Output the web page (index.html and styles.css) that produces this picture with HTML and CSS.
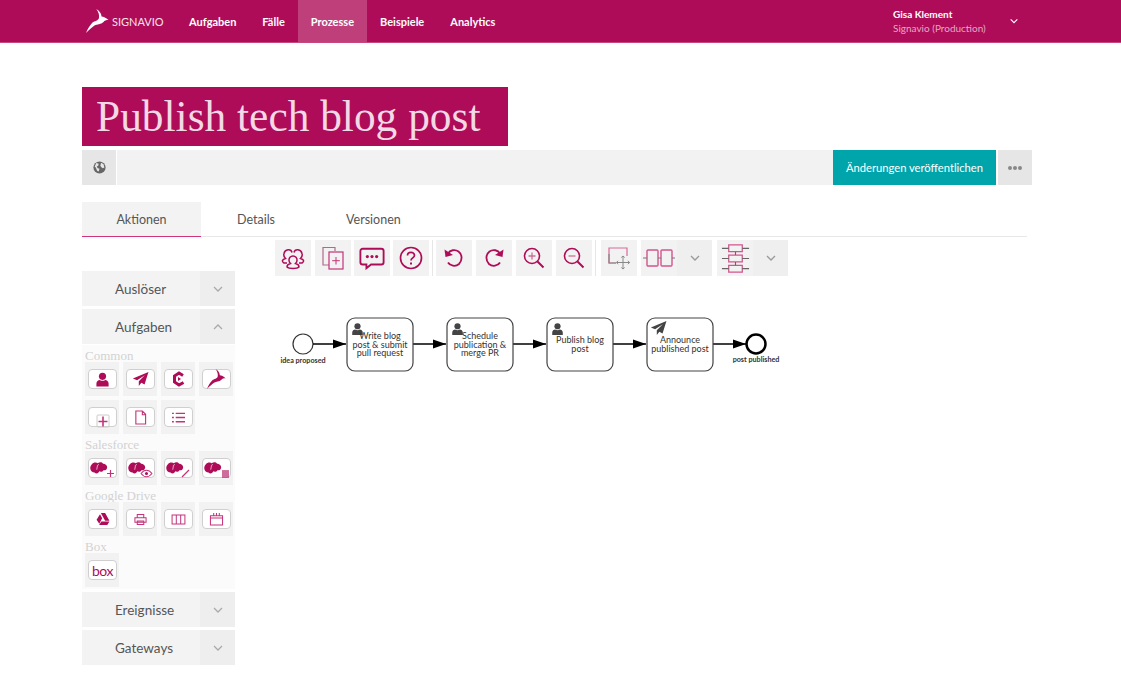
FILE: index.html
```html
<!DOCTYPE html>
<html lang="en">
<head>
    <meta charset="UTF-8">
    <meta name="viewport" content="width=device-width, initial-scale=1.0">
    <title>Publish tech blog post</title>
    <link rel="stylesheet" href="styles.css">
</head>
<body>

    <svg class="defs" width="0" height="0">
        <symbol id="person" viewBox="0 0 16 16">
            <circle cx="8" cy="4.6" r="3.8"/>
            <path d="M1.500 15.500v-3.200c0-2.400 2-3.600 3.600-3.800 1.700 1.200 4.100 1.200 5.800 0 1.600.2 3.600 1.400 3.600 3.800v3.200z"/>
        </symbol>
        <symbol id="plane" viewBox="0 0 16 16">
            <path d="M15.500 1 .8 7l4 1.600L12 4 6.400 9.600v4.400l2.400-3 3 1.600z"/>
        </symbol>
        <symbol id="gazelle" viewBox="0 0 23 24">
            <path d="M10.300 0C13.500 2 15.500 4.500 15.500 7.500 17.500 7.500 20 9 22.500 11 20 11 18.500 11.500 17.500 13 15 15.500 11 15 8.500 16.500 6 18 3 21 0 24 1.500 20 4 16 6.500 13.500 8.500 12.200 12.500 11.500 13 9 13.500 6 12.500 3 10.300 0z"/>
        </symbol>
        <symbol id="cloud" viewBox="0 0 22 16">
            <path d="M2 3C4 0 8 0 9.500 1.500c2-1.500 5-1.500 6.500.5 2.500 0 5.500 2 5 5-.3 2.500-2.500 3.500-4.500 3-1 2-3.500 2.500-5 1.500-1 2.500-4 3.500-6 1.500C3 13 .5 11 .3 8 0 6 1 4 2 3z"/>
            <path class="cloud-s" d="M11 3.500c-1-.5-2 0-2 1.500l-.8 4.500"/>
        </symbol>
        <symbol id="chev" viewBox="0 0 12 8">
            <path d="M2 2l4 4 4-4" fill="none" stroke="currentColor" stroke-width="1.300"/>
        </symbol>
    </svg>

    <!-- Top bar -->
    <header class="topbar">
        <a class="brand">
            <svg class="brand-logo"><use href="#gazelle"/></svg>
            <span class="brand-name">SIGNAVIO</span>
        </a>
        <nav class="topnav">
            <a class="topnav-item">Aufgaben</a>
            <a class="topnav-item">Fälle</a>
            <a class="topnav-item active">Prozesse</a>
            <a class="topnav-item">Beispiele</a>
            <a class="topnav-item">Analytics</a>
        </nav>
        <div class="user">
            <div class="user-text">
                <strong>Gisa Klement</strong>
                <span>Signavio (Production)</span>
            </div>
            <svg class="user-chev"><use href="#chev"/></svg>
        </div>
    </header>

    <main class="page">
        <h1 class="title">Publish tech blog post</h1>

        <!-- Action bar -->
        <div class="actionbar">
            <div class="actionbar-globe">
                <svg viewBox="0 0 16 16" width="13" height="13">
                    <circle cx="8" cy="8" r="7.500" fill="#666"/>
                    <path d="M4 2.500l3 1-.5 2-2 1.500 1.500 2 2 .5L7 13l-2-1-1.500-4-1.500-1zM10 2l3 2 1 4-2 1-2-1.500-1-2z" fill="#e6e6e6"/>
                </svg>
            </div>
            <div class="actionbar-fill"></div>
            <button class="publish">Änderungen veröffentlichen</button>
            <div class="actionbar-more"><i></i><i></i><i></i></div>
        </div>

        <div class="tabs">
            <a class="tab active">Aktionen</a>
            <a class="tab tab-details">Details</a>
            <a class="tab tab-versions">Versionen</a>
        </div>

        <div class="workspace">
            <!-- Palette on the left -->
            <aside class="palette">
                <div class="acc"><span class="acc-label">Auslöser</span><span class="acc-chev"><svg><use href="#chev"/></svg></span></div>
                <div class="acc"><span class="acc-label">Aufgaben</span><span class="acc-chev up"><svg><use href="#chev"/></svg></span></div>
                <div class="acc-body">
                    <div class="group-name">Common</div>
                    <div class="tiles">
                        <div class="tile"><div class="tile-btn"><svg class="ico" width="15" height="15"><use href="#person"/></svg></div></div>
                        <div class="tile"><div class="tile-btn"><svg class="ico" width="17" height="17"><use href="#plane"/></svg></div></div>
                        <div class="tile"><div class="tile-btn"><svg class="ico-hex" viewBox="0 0 16 16" width="16" height="16"><path d="M12 4.500 8 2 3.500 5v6L8 14l4.500-2.500" stroke-width="3"/><path class="solid" d="M7 6l3 2-3 2z"/></svg></div></div>
                        <div class="tile"><div class="tile-btn"><svg class="ico" width="19" height="20"><use href="#gazelle"/></svg></div></div>
                        <div class="tile"><div class="tile-btn"><svg class="ico-line low" viewBox="0 0 14 14" width="14" height="14"><rect x="1" y="1" width="12" height="12" rx="1" stroke="#ccc"/><path d="M7 2.500v10M2.500 7.500h9" stroke-width="1.600"/></svg></div></div>
                        <div class="tile"><div class="tile-btn"><svg class="ico-line" viewBox="0 0 14 16" width="13" height="15"><path d="M2 1h7l3.500 3.500V15H2zM9 1v4h3.500" stroke-width="1.200"/></svg></div></div>
                        <div class="tile"><div class="tile-btn"><svg class="ico-line" viewBox="0 0 16 14" width="15" height="13"><path d="M5 2.500h10M5 7h10M5 11.500h10M1 2.500h2M1 7h2M1 11.500h2" stroke-width="1.500"/></svg></div></div>
                    </div>
                    <div class="group-name">Salesforce</div>
                    <div class="tiles">
                        <div class="tile"><div class="tile-btn"><svg class="ico cloud" width="18" height="13"><use href="#cloud"/></svg><svg class="ico-line mark" viewBox="0 0 9 9" width="9" height="9"><path d="M4.500 1v7M1 4.500h7" stroke-width="1.200"/></svg></div></div>
                        <div class="tile"><div class="tile-btn"><svg class="ico cloud" width="18" height="13"><use href="#cloud"/></svg><svg class="ico-line mark" viewBox="0 0 12 8" width="13" height="9"><path d="M1 4c3-4 7-4 10 0-3 4-7 4-10 0z" stroke-width="1"/><circle cx="6" cy="4" r="1.400" fill="#ae0c58" stroke="none"/></svg></div></div>
                        <div class="tile"><div class="tile-btn"><svg class="ico cloud" width="18" height="13"><use href="#cloud"/></svg><svg class="ico-line mark" viewBox="0 0 10 10" width="10" height="10"><path d="M1 9l7-7" stroke-width="1.300"/></svg></div></div>
                        <div class="tile"><div class="tile-btn"><svg class="ico cloud" width="18" height="13"><use href="#cloud"/></svg><svg class="ico mark" viewBox="0 0 8 9" width="7" height="8"><path d="M0 0h8v9H0z" opacity=".6"/></svg></div></div>
                    </div>
                    <div class="group-name">Google Drive</div>
                    <div class="tiles">
                        <div class="tile"><div class="tile-btn"><svg class="ico" viewBox="0 0 16 14" width="14" height="12"><path d="M5.500 0h5l5 9h-5zM4.500 1.500l2.500 4.500-3.300 6.500L.5 8zM6 10h9.500L13 14H3.500z"/></svg></div></div>
                        <div class="tile"><div class="tile-btn"><svg class="ico-line" viewBox="0 0 14 14" width="13" height="13"><path d="M3.500 5V1.500h7V5M1 5h12v5H1zM3.500 8.500h7v4h-7z" stroke-width="1.100"/></svg></div></div>
                        <div class="tile"><div class="tile-btn"><svg class="ico-line" viewBox="0 0 16 12" width="15" height="11"><path d="M1 1h14v10H1zM5.600 1v10M10.400 1v10" stroke-width="1.100"/></svg></div></div>
                        <div class="tile"><div class="tile-btn"><svg class="ico-line" viewBox="0 0 16 15" width="15" height="14"><path d="M1.500 4h13v10h-13zM1.500 6.500h13M5 1v3.500M8 1v3.500M11 1v3.500" stroke-width="1.100"/></svg></div></div>
                    </div>
                    <div class="group-name">Box</div>
                    <div class="tiles">
                        <div class="tile"><div class="tile-btn box-logo">box</div></div>
                    </div>
                </div>
                <div class="acc"><span class="acc-label">Ereignisse</span><span class="acc-chev"><svg><use href="#chev"/></svg></span></div>
                <div class="acc"><span class="acc-label">Gateways</span><span class="acc-chev"><svg><use href="#chev"/></svg></span></div>
            </aside>

            <section class="editor">
                <!-- Editor toolbar -->
                <div class="tools">
                    <div class="tool"><svg class="tool-ico" viewBox="0 0 24 24"><path d="M12 10a4 4 0 0 1 4 4.500c0 1.500-1 2.500-1.500 3 2 .5 3.500 1.500 3.500 3.500-2 2-10 2-12 0 0-2 1.500-3 3.500-3.500-.5-.5-1.500-1.500-1.500-3a4 4 0 0 1 4-4.500z" stroke-width="1.500"/><path d="M6 17H3C.5 15.500 1 13.500 4.500 12.500 3 11 2.500 9 3 7.500 4 3 10 2.500 11 6.500M18 17h3c2.500-1.500 2-3.500-1.500-4.500 1.500-1.500 2-3.500 1.500-5C20 3 14 2.500 13 6.500" stroke-width="1.500"/></svg></div>
                    <div class="tool"><svg class="tool-ico" viewBox="0 0 24 24"><path d="M14 5V1.500H2V19h6" stroke="#b06a8c" stroke-width="1.200"/><rect x="8" y="6" width="14" height="17" stroke="#c4337a" stroke-width="1.200"/><path d="M15 11v7.500M11.200 14.700h7.600" stroke="#c4337a" stroke-width="1"/></svg></div>
                    <div class="tool tight"><svg class="tool-ico chat" viewBox="0 0 28 24"><path d="M4 2h20a2.500 2.500 0 0 1 2.500 2.500v12A2.500 2.500 0 0 1 24 19H13l-5 4v-4H4a2.500 2.500 0 0 1-2.500-2.500v-12A2.500 2.500 0 0 1 4 2z" stroke-width="2"/><circle class="solid" cx="9" cy="10.500" r="1.700"/><circle class="solid" cx="14" cy="10.500" r="1.700"/><circle class="solid" cx="19" cy="10.500" r="1.700"/></svg></div>
                    <div class="tool tight"><svg class="tool-ico" viewBox="0 0 24 24"><circle cx="12" cy="12" r="10.500" stroke-width="1.700"/><path d="M8.500 9.500c0-2 1.700-3.200 3.500-3.200s3.500 1.200 3.500 3c0 2.500-3.500 2.700-3.500 5.200" stroke-width="1.700"/><path d="M12 16.500v2" stroke-width="2"/></svg></div>
                    <div class="tool-sep"></div>
                    <div class="tool"><svg class="tool-ico" viewBox="0 0 24 24"><path d="M6 7.500C8 4 13 3 16.500 5.500c4 3 4 9 .5 12.500-3.500 3-9 2-11-1.500" stroke-width="1.800"/><path class="solid" d="M2.500 3.500l1 7.500 7.500-2z"/></svg></div>
                    <div class="tool"><svg class="tool-ico" viewBox="0 0 24 24"><path d="M18 7.500C16 4 11 3 7.500 5.500c-4 3-4 9-.5 12.500 3.500 3 9 2 11-1.500" stroke-width="1.800"/><path class="solid" d="M21.500 3.500l-1 7.500-7.500-2z"/></svg></div>
                    <div class="tool"><svg class="tool-ico" viewBox="0 0 24 24"><circle cx="10" cy="10" r="7.500" stroke-width="1.600"/><path d="M15.500 15.500l6 6" stroke-width="2"/><path d="M10 6.500v7M6.500 10h7" stroke="#cc6d97" stroke-width="1.300"/></svg></div>
                    <div class="tool"><svg class="tool-ico" viewBox="0 0 24 24"><circle cx="10" cy="10" r="7.500" stroke-width="1.600"/><path d="M15.500 15.500l6 6" stroke-width="2"/><path d="M6.500 10h7" stroke="#cc6d97" stroke-width="1.300"/></svg></div>
                    <div class="tool-sep second"></div>
                    <div class="tool"><svg class="tool-ico" viewBox="0 0 24 24"><path d="M9 17H2V2h18v8" stroke="#d86a9b" stroke-width="1.200"/><path d="M2 8v9h7" stroke="#888" stroke-width="1.200"/><path d="M16 10v13M9.500 16.500h13M14.300 11.500l1.700-1.500 1.700 1.500M14.300 21.500l1.700 1.500 1.700-1.500M11 14.800l-1.500 1.700 1.500 1.700M21 14.800l1.500 1.700-1.500 1.700" stroke="#888" stroke-width="1"/></svg></div>
                    <div class="tool-pair">
                        <div class="tool"><svg class="tool-ico pair" viewBox="0 0 32 20"><rect x="4" y="2" width="11" height="16" rx="1" stroke="#d4558e" stroke-width="1.400"/><rect x="18" y="2" width="11" height="16" rx="1" stroke="#d4558e" stroke-width="1.400"/><path d="M0 10h4M15 10h3M29 10h3" stroke="#777" stroke-width="1.200"/></svg></div>
                        <div class="tool-more"><svg><use href="#chev"/></svg></div>
                    </div>
                    <div class="tool-pair">
                        <div class="tool"><svg class="tool-ico stack" viewBox="0 0 32 32"><path d="M9 2h14v7H9zM9 12.500h14v7H9zM9 23h14v7H9z" stroke="#d4558e" stroke-width="1.300"/><path d="M2 5.500h7M23 5.500h7M2 16h7M23 16h7M2 26.500h7M23 26.500h7M16 9v3.500M16 19.500V23" stroke="#666" stroke-width="1.200"/></svg></div>
                        <div class="tool-more"><svg><use href="#chev"/></svg></div>
                    </div>
                </div>

                <!-- BPMN diagram, coordinates are the diagram's own -->
                <svg class="diagram" viewBox="275 300 520 90" width="520" height="90">
                    <defs>
                        <marker id="arrow" markerWidth="14" markerHeight="10" refX="13" refY="5" orient="auto" markerUnits="userSpaceOnUse">
                            <path d="M0 .5L13 5 0 9.500z" fill="#000"/>
                        </marker>
                    </defs>
                    <circle class="ev" cx="303" cy="344" r="10"/>
                    <circle class="ev end" cx="756" cy="344" r="9.500"/>
                    <path class="flow" d="M313 344h33" marker-end="url(#arrow)"/>
                    <path class="flow" d="M413 344h33" marker-end="url(#arrow)"/>
                    <path class="flow" d="M513 344h33" marker-end="url(#arrow)"/>
                    <path class="flow" d="M613 344h33" marker-end="url(#arrow)"/>
                    <path class="flow" d="M713 344h33" marker-end="url(#arrow)"/>
                    <rect class="task" x="347" y="318" width="66" height="53" rx="8"/>
                    <rect class="task" x="447" y="318" width="66" height="53" rx="8"/>
                    <rect class="task" x="547" y="318" width="66" height="53" rx="8"/>
                    <rect class="task" x="647" y="318" width="66" height="53" rx="8"/>
                    <use href="#person" class="task-ico" x="351" y="322" width="13" height="14"/>
                    <use href="#person" class="task-ico" x="451" y="322" width="13" height="14"/>
                    <use href="#person" class="task-ico" x="551" y="322" width="13" height="14"/>
                    <use href="#plane" class="task-ico" x="650" y="320" width="17" height="17"/>
                    <text class="task-text" x="380"><tspan x="380" y="339">Write blog</tspan><tspan x="380" y="347.500">post &amp; submit</tspan><tspan x="380" y="356">pull request</tspan></text>
                    <text class="task-text" x="480"><tspan x="480" y="339">Schedule</tspan><tspan x="480" y="347.500">publication &amp;</tspan><tspan x="480" y="356">merge PR</tspan></text>
                    <text class="task-text" x="580"><tspan x="580" y="343">Publish blog</tspan><tspan x="580" y="351.500">post</tspan></text>
                    <text class="task-text" x="680"><tspan x="680" y="343">Announce</tspan><tspan x="680" y="351.500">published post</tspan></text>
                    <text class="ev-text" x="303" y="363">idea proposed</text>
                    <text class="ev-text" x="756" y="362">post published</text>
                </svg>
            </section>
        </div>
    </main>

</body>
</html>
```

FILE: styles.css
```css
* {
    box-sizing: border-box;
}
body {
    margin: 0;
    font-family: Lato, sans-serif;
    color: #555;
    background: #fff;
}
.defs {
    position: absolute;
}

/* top bar */
.topbar {
    display: flex;
    height: 43px;
    padding-left: 86px;
    background: #ae0c58;
    border-bottom: 1px solid #c9477f;
    color: #fff;
}
.brand {
    display: flex;
    align-items: center;
    width: 90px;
}
.brand-logo {
    width: 23px;
    height: 24px;
    fill: #fff;
}
.brand-name {
    font-size: 11px;
    margin-left: 3px;
    color: #f6e3ec;
}
.topnav {
    display: flex;
}
.topnav-item {
    display: flex;
    align-items: center;
    padding: 0 13px;
    font-size: 11px;
    font-weight: 700;
}
.topnav-item.active {
    background: #bf3f7b;
}
.user {
    display: flex;
    align-items: center;
    margin-left: auto;
    width: 228px;
}
.user-text {
    display: flex;
    flex-direction: column;
    gap: 1px;
    width: 116px;
    font-size: 10px;
    line-height: 13px;
}
.user-text strong {
    font-weight: 700;
}
.user-text span {
    color: #e5a8c4;
}
.user-chev {
    width: 10px;
    height: 8px;
    color: #fff;
}

/* page head */
.page {
    padding: 44px 0 0 82px;
}
.title {
    width: 426px;
    height: 59px;
    margin: 0;
    padding-left: 14px;
    background: #ae0c58;
    color: #f3d8e5;
    font-family: "Liberation Serif", serif;
    font-size: 43.400px;
    font-weight: normal;
    line-height: 59px;
}
.actionbar {
    display: flex;
    width: 950px;
    height: 35px;
    margin-top: 4px;
}
.actionbar-globe {
    display: flex;
    align-items: center;
    justify-content: center;
    width: 34px;
    background: #e6e6e6;
}
.actionbar-fill {
    flex: 1;
    margin-left: 1px;
    background: #f2f2f2;
}
.publish {
    width: 163px;
    padding: 0;
    border: 0;
    background: #00a5ab;
    color: #fff;
    font-family: inherit;
    font-size: 11.200px;
    white-space: nowrap;
}
.actionbar-more {
    display: flex;
    align-items: center;
    justify-content: center;
    gap: 1px;
    width: 34px;
    margin-left: 2px;
    background: #e6e6e6;
}
.actionbar-more i {
    width: 4px;
    height: 4px;
    border-radius: 50%;
    background: #888;
}

/* tabs */
.tabs {
    display: flex;
    width: 945px;
    height: 35px;
    margin-top: 17px;
    border-bottom: 1px solid #e8e8e8;
}
.tab {
    height: 35px;
    font-size: 12.500px;
    line-height: 35px;
}
.tab.active {
    width: 119px;
    text-align: center;
    background: #f3f3f3;
    border-bottom: 1px solid #d0337c;
}
.tab-details {
    margin-left: 36px;
}
.tab-versions {
    margin-left: 71px;
}

/* palette */
.workspace {
    display: flex;
    align-items: flex-start;
    margin-top: 3px;
}
.palette {
    width: 153px;
    margin-top: 31px;
}
.acc {
    display: flex;
    height: 35px;
    margin-bottom: 3px;
    background: #f3f3f3;
}
.acc-label {
    flex: 1;
    padding-left: 33px;
    font-size: 13.500px;
    line-height: 36px;
}
.acc-chev {
    display: flex;
    align-items: center;
    justify-content: center;
    width: 35px;
    background: #eeeeee;
    color: #aaa;
}
.acc-chev svg {
    width: 12px;
    height: 8px;
}
.acc-chev.up svg {
    transform: rotate(180deg);
}
.acc-body {
    height: 244px;
    margin: -2px 0 3px;
    padding: 4px 3px 0;
    background: #fbfbfb;
}
.group-name {
    height: 12px;
    margin-top: 1px;
    color: #d2d2d2;
    font-family: "Liberation Serif", serif;
    font-size: 13px;
    line-height: 12px;
}
.tiles {
    display: grid;
    grid-template-columns: repeat(4, 34px);
    column-gap: 4px;
    row-gap: 4px;
    margin: 0 0 5px;
}
.tile {
    height: 34px;
    padding: 7px 2px 0 3px;
    background: #f2f2f2;
}
.tile-btn {
    display: flex;
    align-items: center;
    justify-content: center;
    position: relative;
    width: 29px;
    height: 20px;
    background: #fff;
    border: 1px solid #cfcfcf;
    border-radius: 4px;
}
.ico {
    fill: #ae0c58;
}
.ico.cloud {
    margin-right: 7px;
}
.ico-line {
    fill: none;
    stroke: #c4337a;
}
.ico-hex {
    fill: none;
    stroke: #ae0c58;
}
.ico-hex .solid {
    fill: #ae0c58;
    stroke: none;
}
.ico-line.low {
    position: relative;
    top: 4px;
}
.mark {
    position: absolute;
    right: 1px;
    bottom: -1px;
}
.cloud-s {
    fill: none;
    stroke: #fff;
    stroke-width: .8;
}
.box-logo {
    color: #ae0c58;
    font-size: 14px;
    letter-spacing: -.5px;
}

/* editor */
.editor {
    margin-left: 40px;
}
.tools {
    display: flex;
    gap: 4px;
    height: 36px;
}
.tool {
    display: flex;
    align-items: center;
    justify-content: center;
    width: 36px;
    height: 36px;
    background: #f2f2f2;
}
.tool.tight {
    margin-left: -1px;
}
.tool-ico {
    width: 24px;
    height: 24px;
    fill: none;
    stroke: #ae0c58;
}
.tool-ico.chat {
    width: 26px;
}
.tool-ico.pair {
    width: 32px;
    height: 20px;
}
.tool-ico.stack {
    width: 31px;
    height: 31px;
}
.tool-ico .solid {
    fill: #ae0c58;
    stroke: none;
}
.tool-sep {
    width: 1px;
    height: 36px;
    margin: 0 -1px;
    background: #e6e6e6;
}
.tool-sep.second {
    margin: 0 1px 0 -1px;
}
.tool-pair {
    display: flex;
    margin-right: 1px;
}
.tool-more {
    display: flex;
    align-items: center;
    justify-content: center;
    width: 35px;
    height: 36px;
    background: #efefef;
    color: #999;
}
.tool-more svg {
    width: 12px;
    height: 8px;
}

/* diagram */
.diagram {
    display: block;
    margin-top: 24px;
}
.ev {
    fill: #fff;
    stroke: #333;
    stroke-width: 1.200;
}
.ev.end {
    stroke: #000;
    stroke-width: 2.500;
}
.flow {
    fill: none;
    stroke: #000;
    stroke-width: 1.500;
}
.task {
    fill: #fff;
    stroke: #444;
    stroke-width: 1.200;
}
.task-ico {
    fill: #444;
}
.task-text {
    fill: #333;
    font-size: 9px;
    text-anchor: middle;
}
.ev-text {
    fill: #333;
    font-size: 7.200px;
    font-weight: 700;
    text-anchor: middle;
}
```
